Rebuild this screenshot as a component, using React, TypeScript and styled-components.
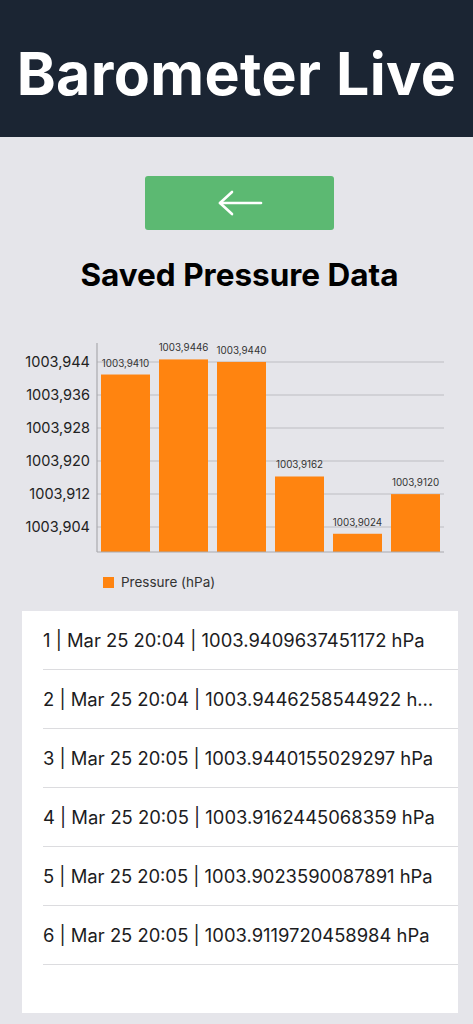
import React from 'react';
import styled, { createGlobalStyle } from 'styled-components';

const GlobalStyle = createGlobalStyle`
  html, body {
    margin: 0;
    padding: 0;
    background: #e5e5ea;
    font-family: Inter, "Noto Sans", "Liberation Sans", sans-serif;
  }
`;

const Page = styled.div`
  width: 473px;
  height: 1024px;
  overflow: hidden;
  display: flex;
  flex-direction: column;
  background: #e5e5ea;
`;

const Header = styled.header`
  height: 137px;
  background: #1b2533;
  display: flex;
  align-items: center;
  justify-content: center;
`;

const AppTitle = styled.h1`
  margin: 0;
  color: #ffffff;
  font-size: 59px;
  font-weight: 700;
  letter-spacing: 0.4px;
  padding-top: 10px;
`;

const BackButton = styled.button`
  align-self: center;
  margin: 39px 0 0 6px;
  width: 189px;
  height: 54px;
  border: none;
  border-radius: 3px;
  background: #5cb972;
  display: flex;
  align-items: center;
  justify-content: center;
  cursor: pointer;
`;

const SectionTitle = styled.h2`
  margin: 28px 0 0 6px;
  text-align: center;
  font-size: 31.5px;
  font-weight: 700;
  color: #000000;
  line-height: 34px;
`;

const ChartBox = styled.div`
  margin-top: 43px;
  height: 222px;
`;

const Legend = styled.div`
  display: flex;
  align-items: center;
  gap: 7px;
  height: 16px;
  margin: 17px 0 0 103px;
  font-size: 13.5px;
  color: #333333;
`;

const Swatch = styled.span`
  width: 11px;
  height: 11px;
  background: #ff8410;
`;

const Card = styled.div`
  margin: 21px 15px 0 22px;
  height: 402px;
  background: #ffffff;
  display: flex;
  flex-direction: column;
`;

const Row = styled.div`
  margin-left: 21px;
  height: 58px;
  border-bottom: 1px solid #dcdcdf;
  display: flex;
  align-items: center;
  flex-shrink: 0;
`;

const RowText = styled.span`
  font-size: 18.4px;
  color: #1c1c1e;
  white-space: nowrap;
  overflow: hidden;
  text-overflow: ellipsis;
  max-width: 392px;
`;

const readings = [
  { time: 'Mar 25 20:04', value: '1003.9409637451172' },
  { time: 'Mar 25 20:04', value: '1003.9446258544922' },
  { time: 'Mar 25 20:05', value: '1003.9440155029297' },
  { time: 'Mar 25 20:05', value: '1003.9162445068359' },
  { time: 'Mar 25 20:05', value: '1003.9023590087891' },
  { time: 'Mar 25 20:05', value: '1003.9119720458984' },
];

const ticks = [1003.944, 1003.936, 1003.928, 1003.92, 1003.912, 1003.904];

// chart coordinates: svg top sits at page y 335
const yOf = (v: number) => 362 + ((1003.944 - v) / 0.008) * 33 - 335;
const fmt = (v: number, d: number) => v.toFixed(d).replace('.', ',');

const BackArrow = () => (
  <svg width="46" height="26" viewBox="0 0 46 26" fill="none">
    <path d="M3 13H44" stroke="#fff" strokeWidth="2.6" strokeLinecap="round" />
    <path d="M15 2L3 13L15 24" stroke="#fff" strokeWidth="2.6" strokeLinecap="round" strokeLinejoin="round" />
  </svg>
);

const PressureChart = () => {
  const bottom = 552 - 335;
  return (
    <svg width="473" height="222" viewBox="0 0 473 222">
      {ticks.map(t => (
        <g key={t}>
          <line x1="97" x2="444" y1={yOf(t)} y2={yOf(t)} stroke="#bdbdc2" strokeWidth="1" />
          <text x="90" y={yOf(t) + 5} textAnchor="end" fontSize="14.5" fill="#222" fontFamily="Inter, sans-serif">
            {fmt(t, 3)}
          </text>
        </g>
      ))}
      {readings.map((r, i) => {
        const v = parseFloat(r.value);
        const x = 101 + i * 58;
        const top = yOf(v);
        return (
          <g key={i}>
            <rect x={x} y={top} width="49" height={bottom - top} fill="#ff8410" />
            <text x={x + 24.5} y={top - 8} textAnchor="middle" fontSize="9.8" fill="#333" fontFamily="Inter, sans-serif">
              {fmt(v, 4)}
            </text>
          </g>
        );
      })}
      <line x1="97" x2="97" y1="8" y2={bottom} stroke="#a9a9ae" strokeWidth="1.2" />
      <line x1="97" x2="444" y1={bottom} y2={bottom} stroke="#a9a9ae" strokeWidth="1.2" />
    </svg>
  );
};

export default function App() {
  return (
    <Page>
      <GlobalStyle />
      <Header>
        <AppTitle>Barometer Live</AppTitle>
      </Header>
      <BackButton aria-label="Back">
        <BackArrow />
      </BackButton>
      <SectionTitle>Saved Pressure Data</SectionTitle>
      <ChartBox>
        <PressureChart />
      </ChartBox>
      <Legend>
        <Swatch />
        Pressure (hPa)
      </Legend>
      <Card>
        {readings.map((r, i) => (
          <Row key={i}>
            <RowText>{`${i + 1} | ${r.time} | ${r.value} hPa`}</RowText>
          </Row>
        ))}
      </Card>
    </Page>
  );
}
